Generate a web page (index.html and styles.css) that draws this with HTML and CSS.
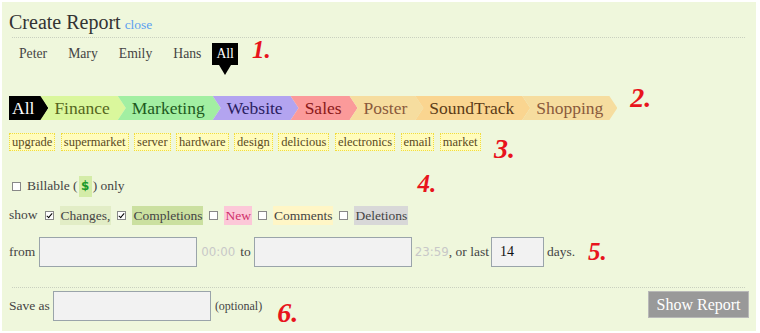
FILE: index.html
```html
<!DOCTYPE html>
<html>
<head>
<meta charset="utf-8">
<link rel="stylesheet" href="styles.css">
</head>
<body>
<div class="panel">
  <div class="head"><span class="title">Create Report</span><a class="close" href="#">close</a></div>
  <div class="rule"></div>
  <div class="people">
    <span class="person">Peter</span>
    <span class="person">Mary</span>
    <span class="person">Emily</span>
    <span class="person">Hans</span>
    <span class="person sel">All</span>
    <span class="num n1">1.</span>
  </div>
  <div class="crumbrow">
    <div class="crumbs">
      <span class="crumb c-all">All</span>
      <span class="crumb c-fin">Finance</span>
      <span class="crumb c-mkt">Marketing</span>
      <span class="crumb c-web">Website</span>
      <span class="crumb c-sal">Sales</span>
      <span class="crumb c-pos">Poster</span>
      <span class="crumb c-snd">SoundTrack</span>
      <span class="crumb c-shp">Shopping</span>
    </div>
    <span class="num n2">2.</span>
  </div>
  <div class="tags">
    <span class="tag">upgrade</span>
    <span class="tag">supermarket</span>
    <span class="tag">server</span>
    <span class="tag">hardware</span>
    <span class="tag">design</span>
    <span class="tag">delicious</span>
    <span class="tag">electronics</span>
    <span class="tag">email</span>
    <span class="tag">market</span>
    <span class="num n3">3.</span>
  </div>
  <div class="billrow">
    <span class="box"></span>
    <span class="billtxt">Billable (</span><span class="dollar">$</span><span>) only</span>
    <span class="num n4">4.</span>
  </div>
  <div class="showrow">
    <span class="showtxt">show</span>
    <span class="box on"></span><span class="lbl l-chg">Changes,</span>
    <span class="box on"></span><span class="lbl l-cmp">Completions</span>
    <span class="box"></span><span class="lbl l-new">New</span>
    <span class="box"></span><span class="lbl l-com">Comments</span>
    <span class="box"></span><span class="lbl l-del">Deletions</span>
  </div>
  <div class="daterow">
    <span>from</span>
    <span class="inp wide"></span>
    <span class="time">00:00</span>
    <span class="to">to</span>
    <span class="inp wide"></span>
    <span class="time t2">23:59</span><span class="orlast">, or last</span>
    <span class="inp small">14</span>
    <span class="days">days.</span>
    <span class="num n5">5.</span>
  </div>
  <div class="rule rule2"></div>
  <div class="saverow">
    <span>Save as</span>
    <span class="inp wide"></span>
    <span class="opt">(optional)</span>
    <span class="num n6">6.</span>
    <span class="spacer"></span>
    <button class="btn">Show Report</button>
  </div>
</div>
</body>
</html>
```
FILE: styles.css
```css
html, body { margin: 0; padding: 0; background: #fff; }
body { font-family: "Liberation Serif", "Times New Roman", serif; color: #444; font-size: 13.5px; }
.panel {
  margin: 2px 4px 0 2px;
  height: 329px;
  box-sizing: border-box;
  background: #eff7dc;
  padding: 0 7px 0 7px;
}
.head {
  display: flex; align-items: baseline; gap: 4px;
  height: 35px; padding-top: 9px; box-sizing: border-box;
}
.title { font-size: 20px; color: #333; line-height: 22px; }
.close { font-size: 13.5px; color: #5c9ff0; text-decoration: none; }
.rule { height: 0; border-top: 1px dotted #c9d0bf; margin: 0 4px 0 3px; }
.people {
  display: flex; align-items: center; height: 22px;
  padding-left: 10px; margin-top: 5px; font-size: 13.7px;
}
.person { margin-right: 21px; color: #444; }
.sel {
  position: relative; display: flex; align-items: center; height: 22px; box-sizing: border-box;
  background: #000; color: #fff; padding: 0 4px; margin-right: 14px; margin-left: -10px;
}
.sel::after {
  content: ""; position: absolute; left: 50%; top: 100%; margin-left: -6px;
  border-left: 6px solid transparent; border-right: 6px solid transparent;
  border-top: 10px solid #000;
}
.num {
  font-family: "Liberation Serif", serif; font-style: italic; font-weight: bold;
  color: #e8141c; font-size: 25px; line-height: 20px;
}
.n1 { align-self: flex-start; margin-top: -3px; }
.crumbrow { display: flex; align-items: flex-start; margin-top: 31px; height: 24px; }
.crumbs { display: flex; height: 24px; }
.crumb {
  display: flex; align-items: center; height: 24px;
  font-size: 17.5px; padding: 0 16px 0 14px; margin-left: -8px;
  clip-path: polygon(0 0, calc(100% - 8px) 0, 100% 50%, calc(100% - 8px) 100%, 0 100%, 8px 50%);
}
.c-all { background: #000; color: #fff; padding: 0 14px 0 3px; margin-left: 0;
  clip-path: polygon(0 0, calc(100% - 7px) 0, 100% 50%, calc(100% - 7px) 100%, 0 100%); }
.c-fin { background: #daf79c; color: #55661c; }
.c-mkt { background: #a2efa2; color: #1e5a1e; }
.c-web { background: #b3a4f0; color: #2a2060; }
.c-sal { background: #fb9a9a; color: #8a1818; }
.c-pos { background: #f6dd9f; color: #8a5a3c; }
.c-snd { background: #fad590; color: #5c3c18; }
.c-shp { background: #f6dd9f; color: #8a5a3c; padding-right: 14px; }
.n2 { margin-left: 13px; margin-top: -8px; font-size: 28px; }
.tags { display: flex; align-items: flex-start; gap: 5.5px; margin-top: 13px; height: 18px; }
.tag {
  font-size: 12.5px; color: #5a4a1c; background: #fffcbc; line-height: 16px;
  border: 1px dotted #f0dc40; padding: 0 2px;
}
.n3 { margin-left: 8px; margin-top: 6px; font-size: 28px; }
.billrow { display: flex; align-items: center; margin-top: 26px; height: 18px; padding-left: 3px; }
.box {
  display: inline-block; width: 9px; height: 9px; border: 1px solid #888; box-sizing: border-box;
  background: #fff; position: relative; margin-right: 6px; flex: none;
}
.box.on::after {
  content: ""; position: absolute; left: 2px; top: 0px; width: 2px; height: 5px;
  border-right: 1.5px solid #000; border-bottom: 1.5px solid #000; transform: rotate(40deg);
}
.billtxt { margin-right: 1px; }
.dollar {
  display: flex; align-items: center; justify-content: center; height: 21px; width: 13px;
  background: #d4eca8; color: #1a9a2a; font-family: "DejaVu Sans", sans-serif; font-size: 12px; font-weight: bold;
  margin-right: 1px;
}
.n4 { margin-left: 293px; margin-top: -4px; }
.showrow { display: flex; align-items: center; margin-top: 11px; height: 18px; }
.showtxt { margin-right: 7px; }
.lbl { padding: 1px 1px; margin-right: 6px; line-height: 17px; }
.l-chg { background: #e2edc6; }
.l-cmp { background: #cbe0a0; }
.l-new { background: #fcc8d8; color: #d0306a; }
.l-com { background: #fff6c6; }
.l-del { background: #d8d8d8; }
.daterow { display: flex; align-items: center; margin-top: 13px; height: 30px; }
.inp {
  display: inline-flex; align-items: center; box-sizing: border-box; height: 30px;
  background: #f2f2f2; border: 1px solid #9aa4aa; font-size: 14px; color: #111; flex: none;
}
.wide { width: 158px; margin-left: 3px; }
.daterow .wide:nth-child(2) { margin-left: 4px; }
.small { width: 53px; padding-left: 8px; margin-left: 2px; }
.time { color: #c8c8c8; font-family: "DejaVu Sans", sans-serif; font-size: 11.8px; margin-left: 4px; }
.to { margin-left: 5px; margin-right: 0; }
.t2 { margin-left: 3px; }
.days { margin-left: 3px; }
.n5 { margin-left: 13px; }
.rule2 { margin-top: 20px; }
.saverow { display: flex; align-items: flex-start; margin-top: 3px; height: 30px; }
.saverow > span:first-child { align-self: center; }
.opt { font-size: 12px; margin-left: 4px; align-self: center; }
.n6 { margin-left: 15px; margin-top: 12px; font-size: 28px; }
.spacer { flex: 1; }
.btn {
  font-family: "Liberation Serif", serif; font-size: 16px; color: #fff;
  background: #999; border: 1px solid #b8b8b8; height: 27px; width: 101px; padding: 0;
}
```
